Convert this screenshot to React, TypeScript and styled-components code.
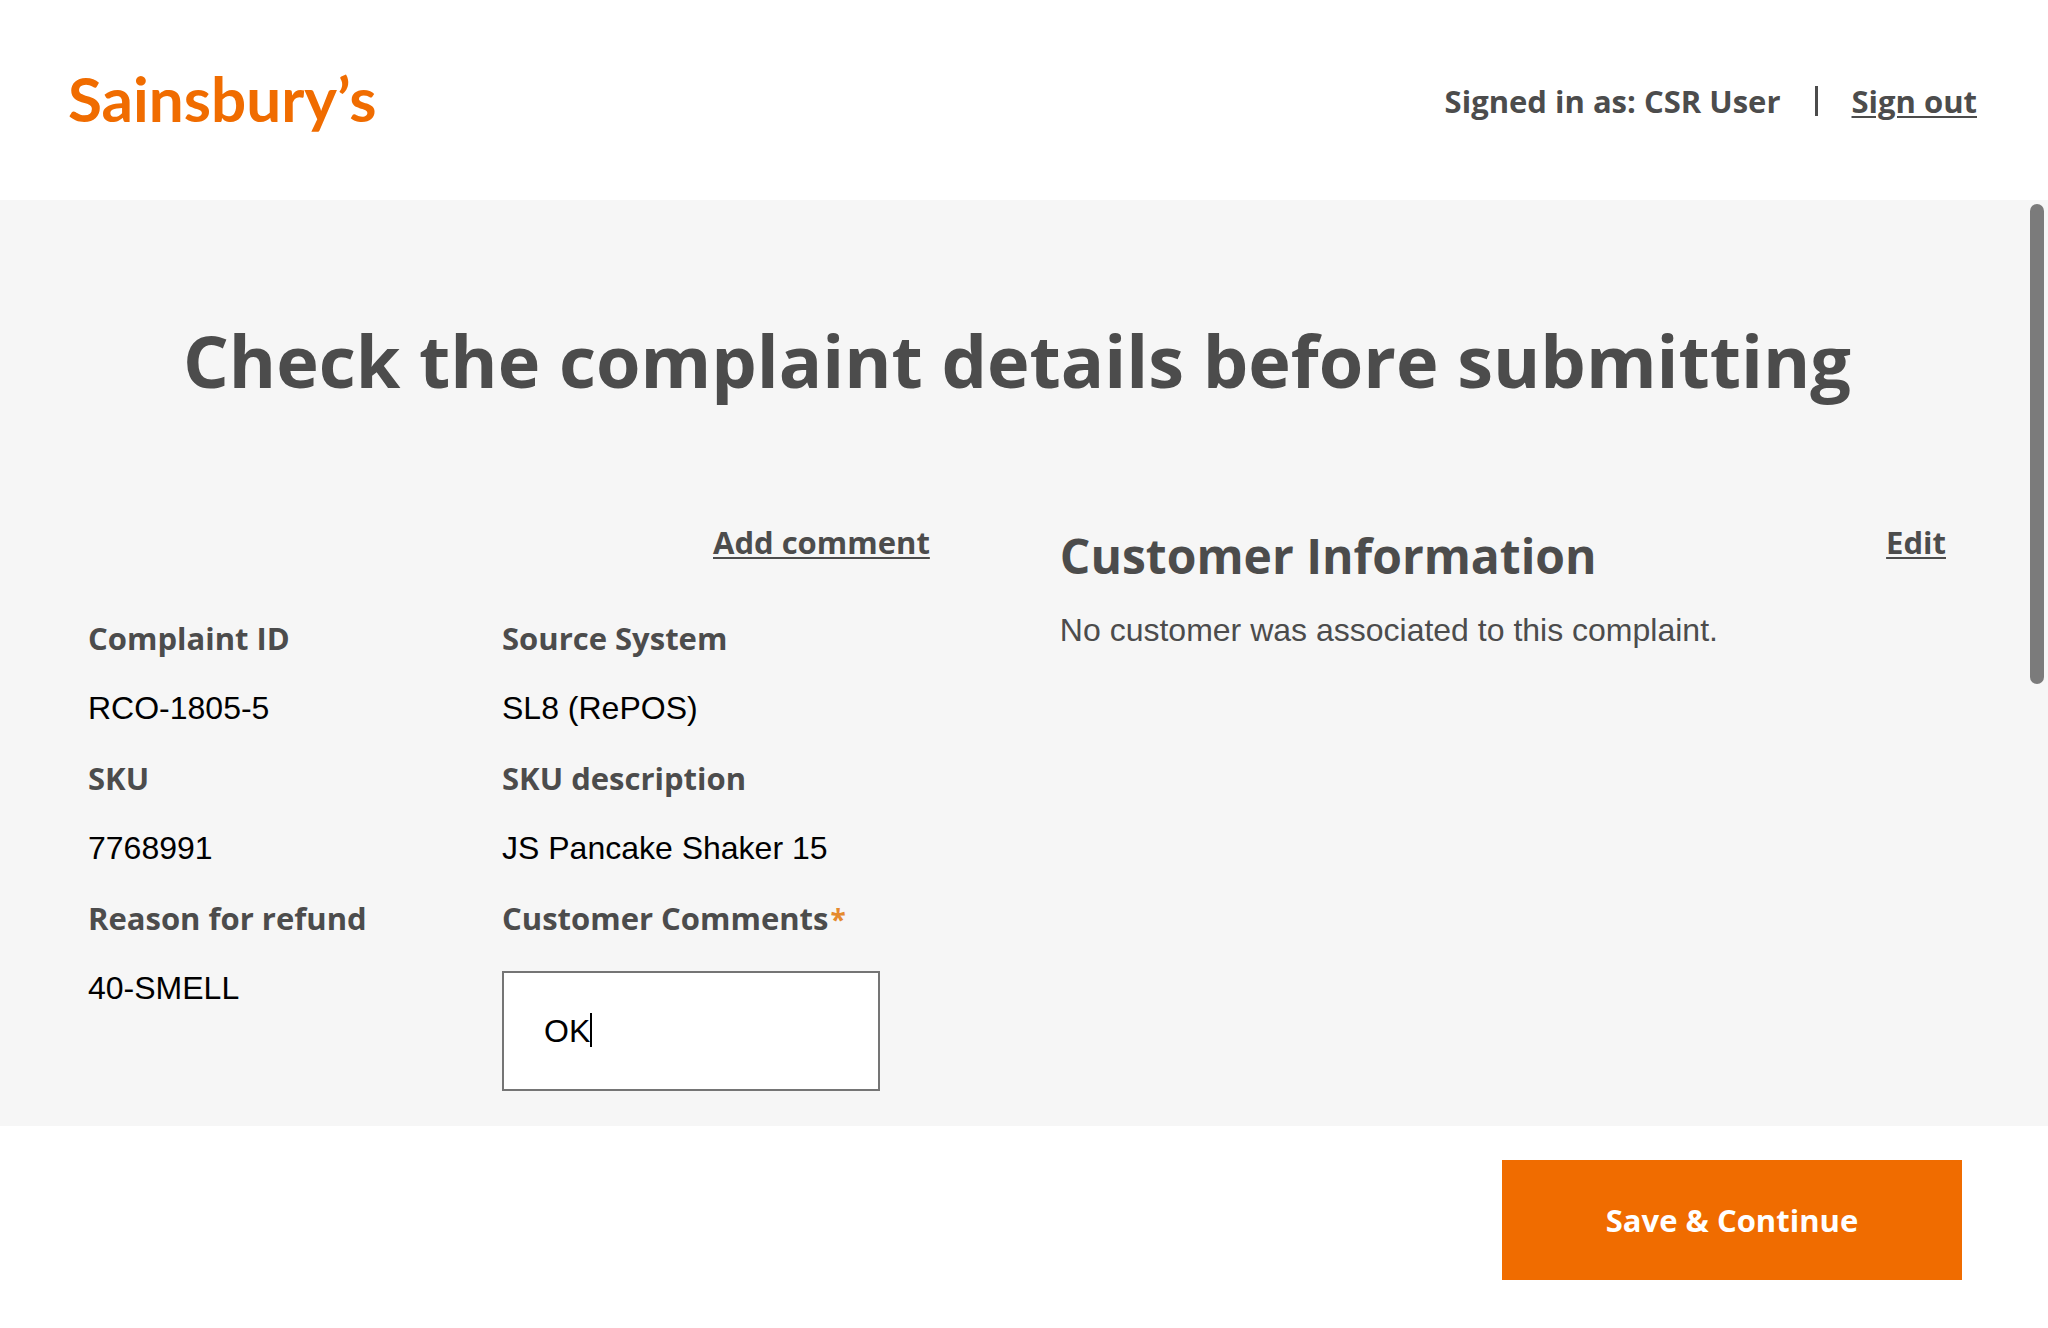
import React, { useState } from 'react';
import styled, { createGlobalStyle } from 'styled-components';

const GlobalStyle = createGlobalStyle`
  *, *::before, *::after { box-sizing: border-box; }
  body {
    margin: 0;
    background: #ffffff;
    color: #000000;
    font-family: "Liberation Sans", Arial, sans-serif;
    font-size: 32px;
    line-height: 40px;
  }
`;

const brandFont = `"Open Sans", "Noto Sans", sans-serif`;
const logoFont = `Lato, "Open Sans", sans-serif`;

const Page = styled.div`
  min-height: 100vh;
  display: flex;
  flex-direction: column;
`;

const Header = styled.header`
  height: 200px;
  padding: 0 71px 0 68px;
  display: flex;
  align-items: center;
  justify-content: space-between;
`;

const Logo = styled.a`
  padding-bottom: 4px;
  font-family: ${logoFont};
  font-size: 62px;
  font-weight: 700;
  line-height: 72px;
  color: #f06c00;
  text-decoration: none;
`;

const Account = styled.div`
  display: flex;
  align-items: center;
  gap: 34px;
  padding-top: 2px;
  font-family: ${brandFont};
  font-size: 31px;
  font-weight: 700;
  color: #4c4c4c;
`;

const Divider = styled.span`
  width: 3px;
  height: 30px;
  background: #4c4c4c;
`;

const TextLink = styled.a`
  font-family: ${brandFont};
  font-size: 31px;
  font-weight: 700;
  color: #4c4c4c;
  text-decoration: underline;
  text-decoration-thickness: 2px;
  text-underline-offset: 3px;
`;

const Main = styled.main`
  position: relative;
  flex: 1;
  padding: 120px 102px 34px 88px;
  background: #f6f6f6;
`;

const ScrollThumb = styled.div`
  position: absolute;
  top: 4px;
  right: 4px;
  width: 14px;
  height: 480px;
  border-radius: 7px;
  background: #7b7b7b;
`;

const Title = styled.h1`
  margin: 0 0 122px;
  font-family: ${brandFont};
  font-size: 72px;
  font-weight: 700;
  line-height: 80px;
  text-align: center;
  color: #4c4c4c;
`;

const Columns = styled.div`
  display: grid;
  grid-template-columns: 19fr 20fr;
  column-gap: 130px;
  align-items: start;
`;

const Actions = styled.div`
  display: flex;
  justify-content: flex-end;
  margin-bottom: 56px;
`;

const Details = styled.div`
  display: grid;
  grid-template-columns: 414px 1fr;
  row-gap: 30px;
  align-items: start;
`;

const Field = styled.div`
  display: flex;
  flex-direction: column;
  align-items: flex-start;
  gap: 30px;
`;

const FieldName = styled.label`
  font-family: ${brandFont};
  font-size: 31px;
  font-weight: 700;
  color: #4c4c4c;
`;

const Required = styled.span`
  margin-left: 2px;
  font-size: 28px;
  line-height: 1;
  color: #e58a2e;
`;

const FieldValue = styled.output``;

const InputBox = styled.div`
  position: relative;
  width: 378px;
  max-width: 100%;
  margin-top: 3px;
`;

const Input = styled.input`
  display: block;
  width: 100%;
  height: 120px;
  padding: 0 40px;
  border: 2px solid #757575;
  border-radius: 0;
  background: #ffffff;
  color: #000000;
  font: inherit;
  outline: none;
  caret-color: transparent;
`;

const Caret = styled.span`
  position: absolute;
  top: 42px;
  left: 88px;
  width: 2px;
  height: 34px;
  background: #000000;
`;

const Customer = styled.section`
  display: grid;
  grid-template-columns: 1fr auto;
  align-items: start;
  color: #4c4c4c;
`;

const SectionTitle = styled.h2`
  margin: 4px 0 24px;
  font-family: ${brandFont};
  font-size: 48px;
  font-weight: 700;
  line-height: 60px;
`;

const Note = styled.p`
  grid-column: 1 / -1;
  margin: 0;
`;

const Footer = styled.footer`
  padding: 34px 86px 48px;
  display: flex;
  justify-content: flex-end;
`;

const SaveButton = styled.button`
  width: 460px;
  height: 120px;
  border: 0;
  background: #f06c00;
  color: #ffffff;
  font-family: ${brandFont};
  font-size: 31px;
  font-weight: 700;
  cursor: pointer;
`;

const details = [
  { id: 'complaint-id', name: 'Complaint ID', value: 'RCO-1805-5' },
  { id: 'source-system', name: 'Source System', value: 'SL8 (RePOS)' },
  { id: 'sku', name: 'SKU', value: '7768991' },
  { id: 'sku-description', name: 'SKU description', value: 'JS Pancake Shaker 15' },
  { id: 'refund-reason', name: 'Reason for refund', value: '40-SMELL' },
];

export default function App() {
  const [comment, setComment] = useState('OK');

  return (
    <Page>
      <GlobalStyle />
      <Header>
        <Logo href="#">Sainsbury’s</Logo>
        <Account>
          <span>Signed in as: CSR User</span>
          <Divider />
          <TextLink href="#">Sign out</TextLink>
        </Account>
      </Header>
      <Main>
        <Title>Check the complaint details before submitting</Title>
        <Columns>
          <section>
            <Actions>
              <TextLink href="#">Add comment</TextLink>
            </Actions>
            <Details>
              {details.map((field) => (
                <Field key={field.id}>
                  <FieldName htmlFor={field.id}>{field.name}</FieldName>
                  <FieldValue id={field.id}>{field.value}</FieldValue>
                </Field>
              ))}
              <Field>
                <FieldName htmlFor="comments">
                  Customer Comments<Required>*</Required>
                </FieldName>
                <InputBox>
                  <Input
                    id="comments"
                    type="text"
                    required
                    value={comment}
                    onChange={(e) => setComment(e.target.value)}
                  />
                  {comment === 'OK' && <Caret />}
                </InputBox>
              </Field>
            </Details>
          </section>
          <Customer>
            <SectionTitle>Customer Information</SectionTitle>
            <TextLink href="#">Edit</TextLink>
            <Note>No customer was associated to this complaint.</Note>
          </Customer>
        </Columns>
        <ScrollThumb />
      </Main>
      <Footer>
        <SaveButton type="button">Save &amp; Continue</SaveButton>
      </Footer>
    </Page>
  );
}
